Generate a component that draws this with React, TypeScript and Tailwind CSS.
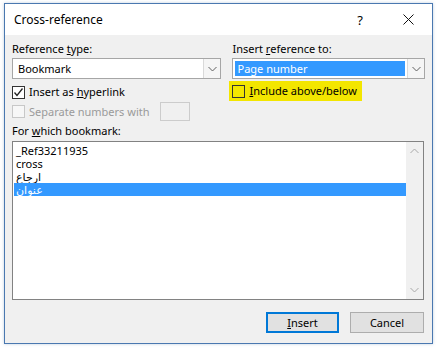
import React from 'react';

const font = { fontFamily: '"Noto Sans", "DejaVu Sans", sans-serif' };

const Chevron = ({ dir = 'down', color = '#606060' }: { dir?: 'up' | 'down'; color?: string }) => (
  <svg width="9" height="6" viewBox="0 0 9 6">
    <polyline
      points={dir === 'down' ? '0.5,1 4.5,5 8.5,1' : '0.5,5 4.5,1 8.5,5'}
      fill="none"
      stroke={color}
      strokeWidth="1"
    />
  </svg>
);

const Check = () => (
  <svg width="11" height="11" viewBox="0 0 11 11">
    <polyline points="1.5,5.5 4,8.5 9.5,1.5" fill="none" stroke="#222" strokeWidth="1.3" />
  </svg>
);

const ComboBox = ({ value, selected }: { value: string; selected?: boolean }) => (
  <div className="flex h-[21px] w-full border border-[#a6a6a6] bg-white">
    <div className="flex flex-1 items-center p-[2px]">
      {selected ? (
        <div className="flex h-full w-full items-center bg-[#3399ff] px-[2px] text-white">{value}</div>
      ) : (
        <div className="px-[3px]">{value}</div>
      )}
    </div>
    <div className="flex w-[17px] items-center justify-center border-l border-[#d9d9d9] bg-[#f5f5f5]">
      <Chevron />
    </div>
  </div>
);

const CheckRow = ({ checked, disabled, children }: { checked?: boolean; disabled?: boolean; children: React.ReactNode }) => (
  <div className={`flex items-center gap-[4px] whitespace-nowrap ${disabled ? 'text-[#9a9a9a]' : 'text-black'}`}>
    <div
      className={`flex h-[13px] w-[13px] shrink-0 items-center justify-center border ${
        disabled ? 'border-[#c8c8c8] bg-[#f7f7f7]' : 'border-[#333333]'
      } ${checked ? 'bg-white' : ''}`}
    >
      {checked && <Check />}
    </div>
    <span>{children}</span>
  </div>
);

export default function App() {
  const items = ['_Ref33211935', 'cross', 'ارجاع', 'عنوان'];
  return (
    <div className="h-[349px] w-[438px] bg-white pl-[4px] pt-[3px] text-[11px] leading-[16px] text-black" style={font}>
      <div className="flex h-[341px] w-[429px] flex-col border border-[#4a78b0] bg-[#f0f0f0] shadow-[0_0_3px_rgba(80,120,170,0.35)]">
        {/* title bar */}
        <div className="flex h-[31px] items-center bg-white pl-[9px] pr-[18px]">
          <span className="flex-1 text-[12px]">Cross-reference</span>
          <span className="mr-[40px] text-[13px]">?</span>
          <svg width="11" height="11" viewBox="0 0 11 11">
            <path d="M0.5 0.5 L10.5 10.5 M10.5 0.5 L0.5 10.5" stroke="#111" strokeWidth="1" />
          </svg>
        </div>

        {/* body */}
        <div className="flex flex-col px-[7px] pt-[6px]">
          <div className="flex gap-[11px]">
            <div className="flex w-[210px] flex-col">
              <div className="h-[16px]">
                Reference <u>t</u>ype:
              </div>
              <div className="mt-[1px]">
                <ComboBox value="Bookmark" />
              </div>
              <div className="mt-[4px] flex h-[18px] items-center">
                <CheckRow checked>
                  Insert as <u>h</u>yperlink
                </CheckRow>
              </div>
              <div className="mt-[1px] flex h-[19px] items-center">
                <div className="w-[148px]">
                  <CheckRow disabled>Separate numbers with</CheckRow>
                </div>
                <div className="h-[19px] w-[30px] border border-[#cccccc] bg-[#f0f0f0]" />
              </div>
            </div>
            <div className="flex w-[193px] flex-col">
              <div className="h-[16px]">
                Insert <u>r</u>eference to:
              </div>
              <div className="mt-[1px]">
                <ComboBox value="Page number" selected />
              </div>
              <div className="ml-[-3px] mt-[2px] flex h-[20px] w-[133px] items-center bg-[#f3e600] pl-[3px]">
                <CheckRow>
                  <u>I</u>nclude above/below
                </CheckRow>
              </div>
            </div>
          </div>

          <div className="mt-[2px] h-[16px]">
            For <u>w</u>hich bookmark:
          </div>
          <div className="mt-[2px] flex h-[159px] w-[412px] border border-[#828282] bg-white">
            <div className="flex flex-1 flex-col pl-[1px] pt-[2px]">
              {items.map((it, i) => (
                <div
                  key={it}
                  className={`h-[13px] overflow-hidden px-[2px] leading-[13px] ${i === 3 ? 'bg-[#3399ff] text-white' : ''}`}
                >
                  <span>{it}</span>
                </div>
              ))}
            </div>
            <div className="flex w-[17px] flex-col items-center justify-between bg-[#f0f0f0] py-[6px]">
              <Chevron dir="up" color="#a8a8a8" />
              <Chevron dir="down" color="#a8a8a8" />
            </div>
          </div>

          <div className="mt-[12px] flex w-[412px] justify-end gap-[11px]">
            <button className="h-[21px] w-[73px] border-2 border-[#0078d7] bg-[#e1e1e1]">
              <u>I</u>nsert
            </button>
            <button className="h-[21px] w-[74px] border border-[#adadad] bg-[#e1e1e1]">Cancel</button>
          </div>
        </div>
      </div>
    </div>
  );
}
